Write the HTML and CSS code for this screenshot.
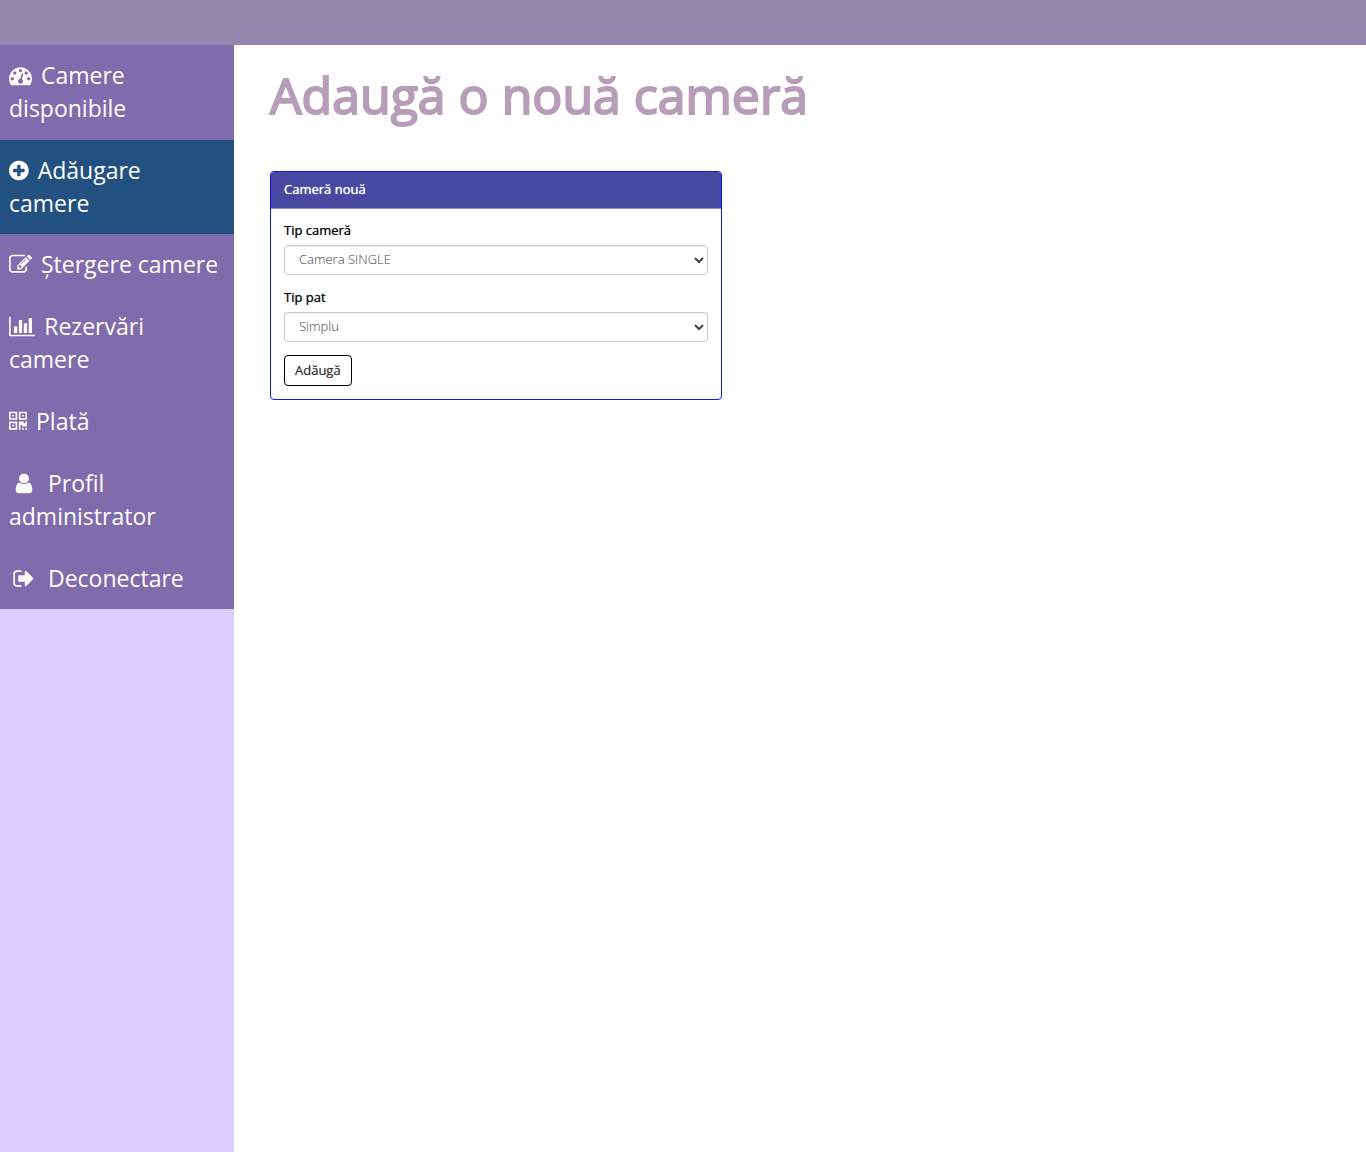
FILE: index.html
```html
<!DOCTYPE html>
<html lang="ro">
<head>
<meta charset="utf-8">
<meta name="viewport" content="width=device-width, initial-scale=1">
<title>Adaugă o nouă cameră</title>
<link rel="stylesheet" href="styles.css">
</head>
<body>
<header class="topbar"></header>
<div class="layout">
  <nav class="sidebar" aria-label="Meniu administrator">
    <ul class="menu">
      <li><a class="menu-link" href="#"><svg class="icon" viewBox="0 0 1792 1792" aria-hidden="true"><path d="M384 1152q0-53-37.500-90.500t-90.500-37.500-90.500 37.500-37.500 90.500 37.500 90.500 90.500 37.500 90.500-37.500 37.500-90.500zm192-448q0-53-37.500-90.500t-90.500-37.500-90.500 37.500-37.500 90.500 37.500 90.500 90.500 37.500 90.500-37.500 37.500-90.500zm428 481l101-382q6-26-7.500-48.500t-38.500-29.500-48 6.500-30 39.500l-101 382q-60 5-107 43.500t-63 98.500q-20 77 20 146t117 89 146-20 89-117q16-60-6-117t-72-91zm660-33q0-53-37.500-90.500t-90.500-37.500-90.500 37.500-37.500 90.500 37.500 90.500 90.500 37.500 90.500-37.500 37.500-90.500zm-640-640q0-53-37.500-90.500t-90.500-37.500-90.500 37.500-37.500 90.500 37.500 90.500 90.500 37.500 90.500-37.500 37.500-90.500zm448 192q0-53-37.500-90.500t-90.500-37.500-90.500 37.500-37.500 90.500 37.500 90.500 90.500 37.500 90.500-37.500 37.500-90.500zm320 448q0 261-141 483-19 29-54 29h-1402q-35 0-54-29-141-221-141-483 0-182 71-348t191-286 286-191 348-71 348 71 286 191 191 286 71 348z"/></svg> Camere disponibile</a></li>
      <li><a class="menu-link active" href="#" aria-current="page"><svg class="icon" viewBox="128 0 1536 1792" aria-hidden="true"><path d="M1344 960v-128q0-26-19-45t-45-19h-256v-256q0-26-19-45t-45-19h-128q-26 0-45 19t-19 45v256h-256q-26 0-45 19t-19 45v128q0 26 19 45t45 19h256v256q0 26 19 45t45 19h128q26 0 45-19t19-45v-256h256q26 0 45-19t19-45zm320-64q0 209-103 385.500t-279.500 279.500-385.500 103-385.500-103-279.500-279.500-103-385.500 103-385.500 279.500-279.500 385.500-103 385.500 103 279.500 279.500 103 385.500z"/></svg> Adăugare camere</a></li>
      <li><a class="menu-link" href="#"><svg class="icon" viewBox="0 0 1792 1792" aria-hidden="true"><path d="M888 1184l116-116-152-152-116 116v56h96v96h56zm440-720q-16-16-33 1l-350 350q-17 17-1 33t33-1l350-350q17-17 1-33zm80 594v190q0 119-84.500 203.500t-203.500 84.500h-832q-119 0-203.500-84.500t-84.500-203.500v-832q0-119 84.500-203.500t203.500-84.500h832q63 0 117 25 15 7 18 23 3 17-9 29l-49 49q-14 14-32 8-23-6-45-6h-832q-66 0-113 47t-47 113v832q0 66 47 113t113 47h832q66 0 113-47t47-113v-126q0-13 9-22l64-64q15-15 35-7t20 29zm-96-738l288 288-672 672h-288v-288zm444 132l-92 92-288-288 92-92q28-28 68-28t68 28l152 152q28 28 28 68t-28 68z"/></svg> Ștergere camere</a></li>
      <li><a class="menu-link" href="#"><svg class="icon" viewBox="0 0 2048 1792" aria-hidden="true"><path d="M640 896v512h-256v-512h256zm384-512v1024h-256v-1024h256zm1024 1152v128h-2048v-1536h128v1408h1920zm-640-896v768h-256v-768h256zm384-384v1152h-256v-1152h256z"/></svg> Rezervări camere</a></li>
      <li><a class="menu-link" href="#"><svg class="icon" viewBox="0 0 1408 1792" aria-hidden="true"><path fill-rule="evenodd" d="M0 128h640v640H0zM128 256v384h384V256zM256 384h128v128H256zM768 128h640v640H768zM896 256v384h384V256zM1024 384h128v128h-128zM0 896h640v640H0zM128 1024v384h384v-384zM256 1152h128v128H256zM768 896h384v128h128V896h128v384h-384v-128H896v384H768zM1024 1408h128v128h-128zM1280 1408h128v128h-128z"/></svg> Plată</a></li>
      <li><a class="menu-link" href="#"><svg class="icon icon-fixed" viewBox="-512 0 2304 1792" aria-hidden="true"><path d="M1280 1399q0 109-62.500 187t-150.500 78h-854q-88 0-150.500-78t-62.500-187q0-85 8.500-160.500t31.500-152 58.500-131 94-89 134.500-34.500q131 128 313 128t313-128q76 0 134.500 34.500t94 89 58.500 131 31.500 152 8.500 160.500zm-256-887q0 159-112.500 271.500t-271.500 112.500-271.500-112.500-112.500-271.500 112.500-271.500 271.500-112.500 271.500 112.500 112.500 271.500z"/></svg> Profil administrator</a></li>
      <li><a class="menu-link" href="#"><svg class="icon icon-fixed" viewBox="-320 0 2304 1792" aria-hidden="true"><path d="M640 1440q0 4 1 20t.5 26.500-3 23.500-10 19.500-20.500 6.500h-320q-119 0-203.500-84.500t-84.500-203.500v-704q0-119 84.500-203.500t203.500-84.500h320q13 0 22.500 9.500t9.500 22.500q0 4 1 20t.5 26.500-3 23.500-10 19.500-20.500 6.500h-320q-66 0-113 47t-47 113v704q0 66 47 113t113 47h312l11.500 1 11.500 3 8 5.500 7 9 2 13.500zm928-544q0 26-19 45l-544 544q-19 19-45 19t-45-19-19-45v-288h-448q-26 0-45-19t-19-45v-384q0-26 19-45t45-19h448v-288q0-26 19-45t45-19 45 19l544 544q19 19 19 45z"/></svg> Deconectare</a></li>
    </ul>
  </nav>
  <main class="content">
    <h1 class="title">Adaugă o nouă cameră</h1>
    <section class="panel">
      <h2 class="panel-heading">Cameră nouă</h2>
      <form class="panel-body">
        <div class="field">
          <label for="room-type">Tip cameră</label>
          <select id="room-type"><option>Camera SINGLE</option></select>
        </div>
        <div class="field">
          <label for="bed-type">Tip pat</label>
          <select id="bed-type"><option>Simplu</option></select>
        </div>
        <button class="submit" type="button">Adăugă</button>
      </form>
    </section>
  </main>
</div>
</body>
</html>
```

FILE: styles.css
```css
* { box-sizing: border-box; }

body {
  display: flex;
  flex-direction: column;
  min-height: 100vh;
  margin: 0;
  background: #fff;
  color: #000;
  font: 13px/18px "Open Sans", sans-serif;
}

.topbar {
  height: 45px;
  background: #9487ad;
}

.layout {
  display: flex;
  flex: 1;
}

.sidebar {
  flex: 0 0 234px;
  background: #dccdff;
}

.menu {
  margin: 0;
  padding: 0;
  list-style: none;
}

.menu-link {
  display: block;
  padding: 14px 9px;
  border-bottom: 1px solid #7d6aa8;
  background: #806bac;
  color: #fff;
  font-size: 23px;
  line-height: 33px;
  text-decoration: none;
}

.menu-link.active {
  border-bottom: 0;
  background: #225081;
}

.menu li:last-child .menu-link { border-bottom: 0; }

.icon {
  height: 23px;
  margin-right: 3px;
  fill: currentColor;
  vertical-align: -3px;
}

.icon-fixed { width: 30px; }

.content {
  flex: 1;
  padding: 16px 12px 36px 36px;
}

.title {
  margin: 0 0 42px;
  color: #b79db8;
  font-size: 50px;
  font-weight: 400;
  line-height: 68px;
  -webkit-text-stroke: 2px #b79db8;
}

.panel {
  width: 41.667%;
  border: 1px solid #1018e0;
  border-radius: 4px;
}

.panel-heading {
  margin: 0;
  padding: 8px 13px 10px;
  border-bottom: 1px solid #8d86ff;
  border-radius: 2px 2px 0 0;
  background: #4848a0;
  color: #fff;
  font-size: 13px;
  font-weight: 500;
  line-height: 18px;
  text-shadow: 0 0 1px #fff;
}

.panel-body { padding: 12px 13px 13px; }

.field { margin-bottom: 13px; }

.field label {
  display: block;
  margin-bottom: 6px;
  font-weight: 500;
  text-shadow: 0 0 1px rgba(0, 0, 0, .6);
}

.field select {
  display: block;
  width: 100%;
  height: 30px;
  padding: 3px 10px 7px;
  border: 1px solid #ccc;
  border-radius: 4px;
  background: #fff;
  color: #444;
  font: 300 13px/18px "Open Sans", sans-serif;
  box-shadow: inset 0 1px 1px rgba(0, 0, 0, .075);
}

.submit {
  display: block;
  height: 31px;
  padding: 4px 10px 6px;
  border: 1px solid #000;
  border-radius: 4px;
  background: #fff;
  color: #333;
  font: 500 13px/18px "Open Sans", sans-serif;
  text-shadow: 0 0 1px rgba(0, 0, 0, .4);
}
```
